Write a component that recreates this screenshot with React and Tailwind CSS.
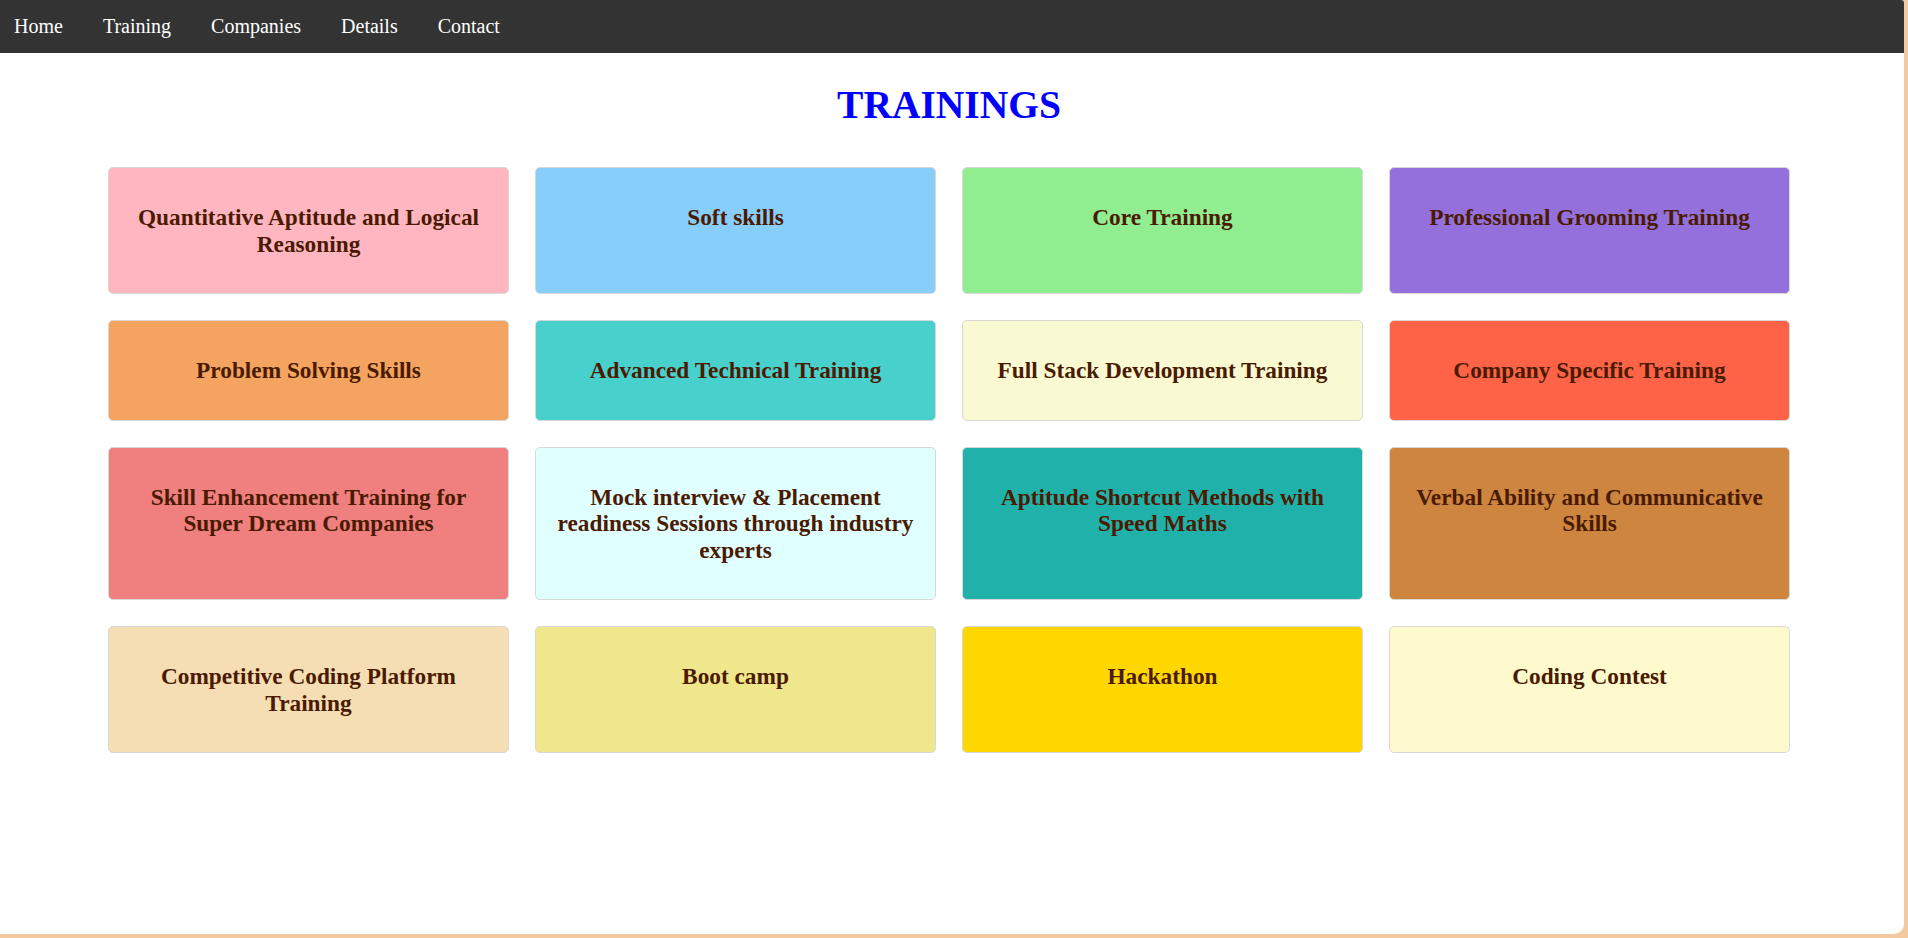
const cards = [
  ["Quantitative Aptitude and Logical Reasoning", "bg-[#FFB6C1]"],
  ["Soft skills", "bg-[#87CEFA]"],
  ["Core Training", "bg-[#90EE90]"],
  ["Professional Grooming Training", "bg-[#9370DB]"],
  ["Problem Solving Skills", "bg-[#F4A460]"],
  ["Advanced Technical Training", "bg-[#48D1CC]"],
  ["Full Stack Development Training", "bg-[#FAFAD2]"],
  ["Company Specific Training", "bg-[#FF6347]"],
  ["Skill Enhancement Training for Super Dream Companies", "bg-[#F08080]"],
  ["Mock interview & Placement readiness Sessions through industry experts", "bg-[#E0FFFF]"],
  ["Aptitude Shortcut Methods with Speed Maths", "bg-[#20B2AA]"],
  ["Verbal Ability and Communicative Skills", "bg-[#CD853F]"],
  ["Competitive Coding Platform Training", "bg-[#F5DEB3]"],
  ["Boot camp", "bg-[#F0E68C]"],
  ["Hackathon", "bg-[#FFD700]"],
  ["Coding Contest", "bg-[#FFFACD]"],
];

const navItems = ["Home", "Training", "Companies", "Details", "Contact"];

export default function App() {
  return (
    <div
      className="w-[1908px] h-[938px] bg-[#f3c9a0] overflow-hidden"
      style={{ fontFamily: '"Liberation Serif", "Times New Roman", serif' }}
    >
      <div className="w-[1904px] h-[934px] bg-white rounded-br-[10px] rounded-tr-[3px] overflow-hidden flex flex-col">
        <nav className="h-[53px] bg-[#333333] flex items-center pl-[14px] gap-[40px] shrink-0">
          {navItems.map((n) => (
            <a key={n} className="text-white text-[20px] leading-[23px] cursor-pointer">
              {n}
            </a>
          ))}
        </nav>
        <h1 className="mt-[30px] h-[44px] leading-[44px] text-center text-[39.5px] font-bold text-[#0000ff] pr-[6px]">
          TRAININGS
        </h1>
        <div className="mt-[40px] pl-[108px] grid grid-cols-[repeat(4,401px)] gap-x-[26px] gap-y-[26px]">
          {cards.map(([t, bg]) => (
            <div
              key={t}
              className={`${bg} border border-[#d8d8d8] rounded-[5px] px-4 py-[36px] text-center`}
            >
              <div className="text-[23.3px] leading-[26.5px] font-bold text-[#4a1a02]">{t}</div>
            </div>
          ))}
        </div>
      </div>
    </div>
  );
}
